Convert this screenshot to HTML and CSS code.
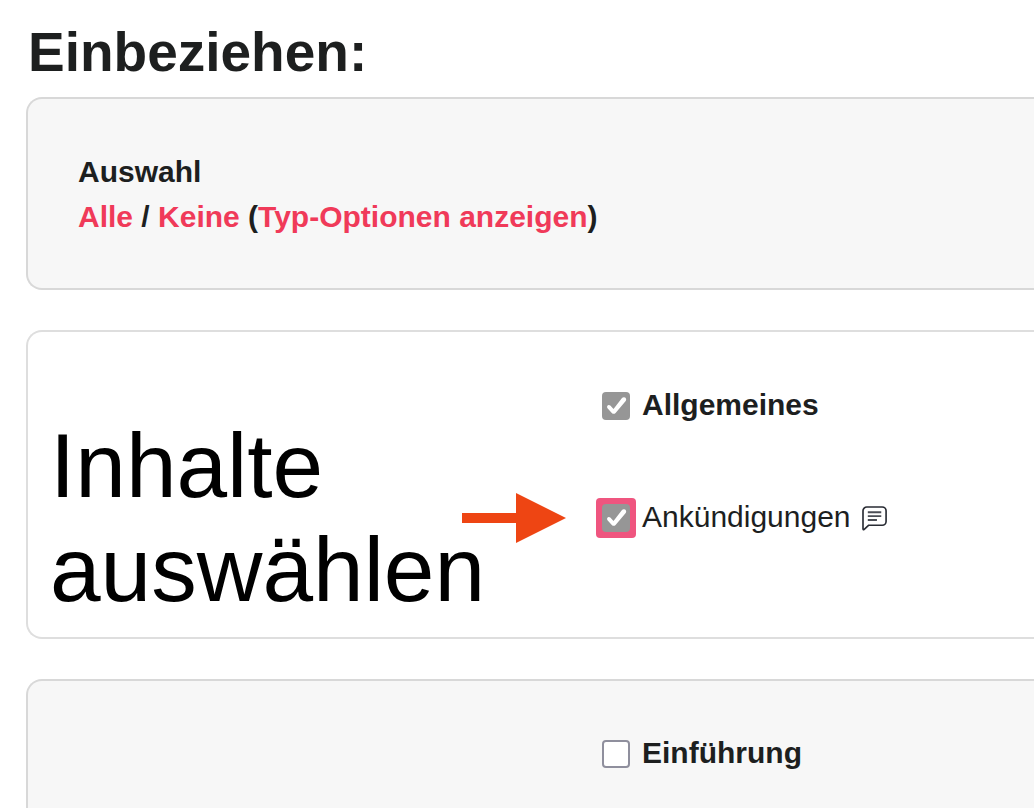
FILE: index.html
```html
<!DOCTYPE html>
<html lang="de">
<head>
    <meta charset="UTF-8">
    <meta name="viewport" content="width=device-width, initial-scale=1.0">
    <title>Einbeziehen</title>
    <link rel="stylesheet" href="styles.css">
</head>
<body>
    <main>
        <h1>Einbeziehen:</h1>

        <section class="card selection">
            <div>Auswahl</div>
            <div><a href="#">Alle</a> / <a href="#">Keine</a> (<a href="#">Typ-Optionen anzeigen</a>)</div>
        </section>

        <section class="card section-card plain">
            <p class="note">Inhalte<br>auswählen</p>
            <div class="options">
                <div class="option">
                    <input type="checkbox" id="general" checked>
                    <label for="general">Allgemeines</label>
                </div>
                <div class="option activity">
                    <svg class="arrow" width="104" height="50" viewBox="0 0 104 50" aria-hidden="true">
                        <path d="M0 20h54V0l50 25-50 25V30H0z" fill="#ee4513"/>
                    </svg>
                    <span class="highlight"><input type="checkbox" id="announcements" checked></span>
                    <label for="announcements">Ankündigungen</label>
                    <svg class="forum-icon" width="25" height="25" viewBox="1 0 26 26" fill="none" stroke-linejoin="round" stroke-linecap="butt" aria-hidden="true">
                        <path d="M5 1h16a4 4 0 0 1 4 4v11a4 4 0 0 1-4 4H7l-5 4.500q-1 .5-1-.8V5a4 4 0 0 1 4-4z" stroke="#282b33" stroke-width="1.700"/>
                        <path d="M6 6.500h14M6 10.500h14M6 14.500h9.500" stroke="#4b4e55" stroke-width="2"/>
                    </svg>
                </div>
            </div>
        </section>

        <section class="card section-card">
            <div class="options">
                <div class="option">
                    <input type="checkbox" id="intro">
                    <label for="intro">Einführung</label>
                </div>
            </div>
        </section>
    </main>
</body>
</html>
```

FILE: styles.css
```css
* {
    margin: 0;
    padding: 0;
    box-sizing: border-box;
}

body {
    font-family: "Liberation Sans", Arial, sans-serif;
    font-size: 30px;
    line-height: 45px;
    color: #1d1f1f;
    background: #fff;
}

main {
    padding: 20px 0 0 26px;
}

h1 {
    font-size: 55px;
    line-height: 64px;
    margin-bottom: 13px;
    padding-left: 2px;
}

a {
    color: #f03a59;
    text-decoration: none;
}

.card {
    border: 2px solid #d8d8d8;
    border-right: none;
    border-radius: 16px 0 0 16px;
    background: #f7f7f7;
    margin-bottom: 40px;
}

.selection {
    padding: 50px 50px 49px;
    font-weight: bold;
}

.section-card {
    display: grid;
    grid-template-columns: 574px 1fr;
    padding: 49px 0;
}

.plain {
    background: #fff;
    border-color: #dedede;
    padding: 50px 0 15px;
}

.note {
    padding: 32px 0 0 22px;
    font-size: 91px;
    line-height: 104px;
    color: #000;
}

.options {
    grid-column: 2;
}

.option {
    display: flex;
    align-items: center;
    position: relative;
    gap: 12px;
    font-weight: bold;
}

.activity {
    margin-top: 67px;
    font-weight: normal;
}

input[type="checkbox"] {
    appearance: none;
    display: block;
    width: 28px;
    height: 28px;
    margin-top: 2px;
    border: 2px solid #8f8f9d;
    border-radius: 4px;
    background: #fff;
}

input[type="checkbox"]:checked {
    border: none;
    background: #969696;
    position: relative;
}

input[type="checkbox"]:checked::after {
    content: "";
    position: absolute;
    inset: 0;
    background: #fff;
    clip-path: path("M5 15.500Q5 13.600 6.500 13.400Q7.700 13.300 8.300 14L11.500 17.400L20 6.600Q21.300 5.300 23.200 6.100Q24.900 7.500 23.900 9.200L13.600 21.500Q11.700 23.200 9.800 21.500L5.500 16.700Z");
}

.highlight {
    margin: -4px -6px -6px;
    padding: 6px;
    border-radius: 4px;
    background: #ef557f;
}

.highlight input[type="checkbox"] {
    margin-top: 0;
}

.arrow {
    position: absolute;
    left: -140px;
    top: -1px;
}

.forum-icon {
    margin-top: 3px;
    overflow: visible;
}
```
